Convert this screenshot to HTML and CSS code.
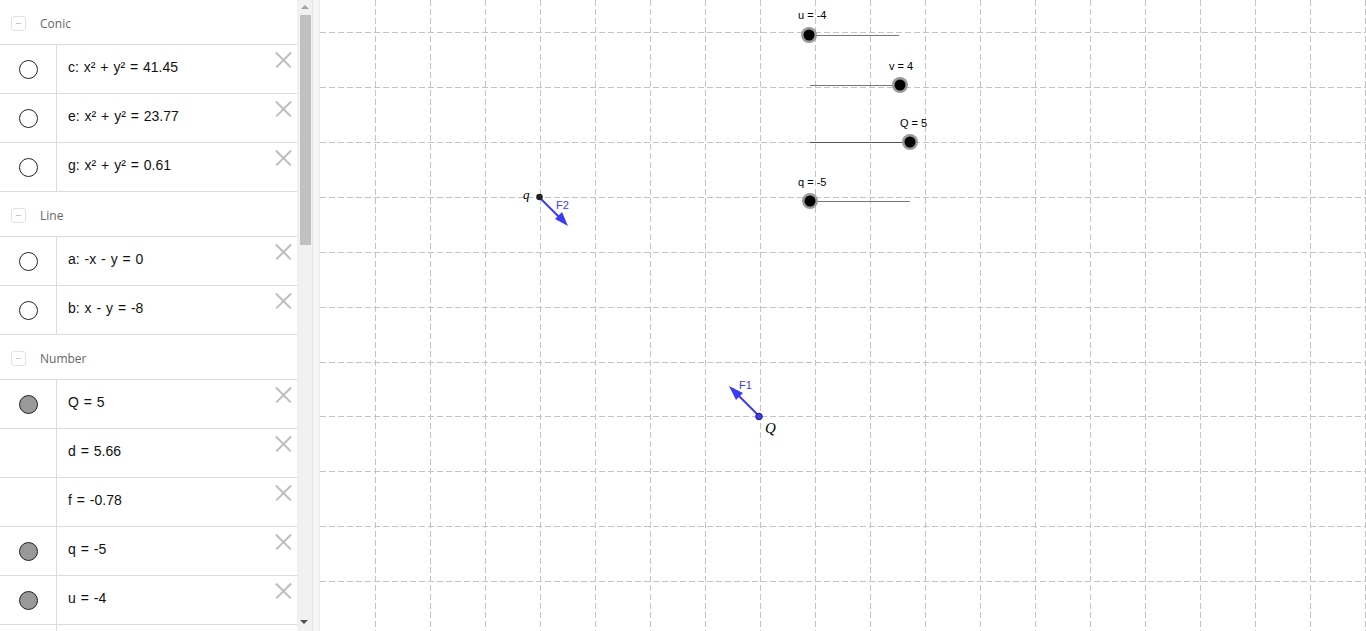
FILE: index.html
```html
<!DOCTYPE html>
<html>
<head>
<meta charset="utf-8">
<link rel="stylesheet" href="styles.css">
</head>
<body>
<div class="app">
  <div class="algebra">
    <div class="group"><span class="toggle"></span><span class="gname">Conic</span></div>
    <div class="row"><div class="mark"><span class="dot"></span></div><div class="expr">c: x² + y² = 41.45</div><span class="del"></span></div>
    <div class="row"><div class="mark"><span class="dot"></span></div><div class="expr">e: x² + y² = 23.77</div><span class="del"></span></div>
    <div class="row"><div class="mark"><span class="dot"></span></div><div class="expr">g: x² + y² = 0.61</div><span class="del"></span></div>
    <div class="group"><span class="toggle"></span><span class="gname">Line</span></div>
    <div class="row"><div class="mark"><span class="dot"></span></div><div class="expr">a: -x - y = 0</div><span class="del"></span></div>
    <div class="row"><div class="mark"><span class="dot"></span></div><div class="expr">b: x - y = -8</div><span class="del"></span></div>
    <div class="group"><span class="toggle"></span><span class="gname">Number</span></div>
    <div class="row"><div class="mark"><span class="dot filled"></span></div><div class="expr">Q = 5</div><span class="del"></span></div>
    <div class="row"><div class="mark"></div><div class="expr">d = 5.66</div><span class="del"></span></div>
    <div class="row"><div class="mark"></div><div class="expr">f = -0.78</div><span class="del"></span></div>
    <div class="row"><div class="mark"><span class="dot filled"></span></div><div class="expr">q = -5</div><span class="del"></span></div>
    <div class="row"><div class="mark"><span class="dot filled"></span></div><div class="expr">u = -4</div><span class="del"></span></div>
    <div class="row last"><div class="mark"></div><div class="expr"></div></div>
  </div>
  <div class="scrollbar">
    <span class="arrow up"></span>
    <div class="thumb"></div>
    <span class="arrow down"></span>
  </div>
  <div class="divider"></div>
  <div class="canvas">
    <svg class="graphics" width="1046" height="631" viewBox="0 0 1046 631" xmlns="http://www.w3.org/2000/svg">
      <g class="grid" stroke="#c4c4c4" stroke-width="1" stroke-dasharray="6 3">
        <line x1="55.5" y1="0" x2="55.5" y2="631"/>
        <line x1="110.5" y1="0" x2="110.5" y2="631"/>
        <line x1="165.5" y1="0" x2="165.5" y2="631"/>
        <line x1="220.5" y1="0" x2="220.5" y2="631"/>
        <line x1="275.5" y1="0" x2="275.5" y2="631"/>
        <line x1="330.5" y1="0" x2="330.5" y2="631"/>
        <line x1="385.5" y1="0" x2="385.5" y2="631"/>
        <line x1="440.5" y1="0" x2="440.5" y2="631"/>
        <line x1="495.5" y1="0" x2="495.5" y2="631"/>
        <line x1="550.5" y1="0" x2="550.5" y2="631"/>
        <line x1="605.5" y1="0" x2="605.5" y2="631"/>
        <line x1="660.5" y1="0" x2="660.5" y2="631"/>
        <line x1="715.5" y1="0" x2="715.5" y2="631"/>
        <line x1="770.5" y1="0" x2="770.5" y2="631"/>
        <line x1="825.5" y1="0" x2="825.5" y2="631"/>
        <line x1="880.5" y1="0" x2="880.5" y2="631"/>
        <line x1="935.5" y1="0" x2="935.5" y2="631"/>
        <line x1="990.5" y1="0" x2="990.5" y2="631"/>
        <line x1="1045.5" y1="0" x2="1045.5" y2="631"/>
        <line x1="0" y1="32.5" x2="1046" y2="32.5"/>
        <line x1="0" y1="87.5" x2="1046" y2="87.5"/>
        <line x1="0" y1="142.5" x2="1046" y2="142.5"/>
        <line x1="0" y1="197.5" x2="1046" y2="197.5"/>
        <line x1="0" y1="252.5" x2="1046" y2="252.5"/>
        <line x1="0" y1="307.5" x2="1046" y2="307.5"/>
        <line x1="0" y1="362.5" x2="1046" y2="362.5"/>
        <line x1="0" y1="416.5" x2="1046" y2="416.5"/>
        <line x1="0" y1="471.5" x2="1046" y2="471.5"/>
        <line x1="0" y1="526.5" x2="1046" y2="526.5"/>
        <line x1="0" y1="581.5" x2="1046" y2="581.5"/>
      </g>

      <g class="sliders" font-family="Liberation Sans, Arial, sans-serif" font-size="11" fill="#000">
        <line x1="489" y1="35.5" x2="579" y2="35.5" stroke="#777" stroke-width="1"/>
        <circle cx="489" cy="35" r="8" fill="#999"/>
        <circle cx="489" cy="35" r="5.5" fill="#000"/>
        <text x="478" y="19">u = -4</text>

        <line x1="490" y1="85.5" x2="580" y2="85.5" stroke="#777" stroke-width="1"/>
        <circle cx="580" cy="85" r="8" fill="#999"/>
        <circle cx="580" cy="85" r="5.5" fill="#000"/>
        <text x="569" y="70">v = 4</text>

        <line x1="490" y1="142.5" x2="590" y2="142.5" stroke="#555" stroke-width="1"/>
        <circle cx="590" cy="142" r="8" fill="#999"/>
        <circle cx="590" cy="142" r="5.5" fill="#000"/>
        <text x="580" y="127">Q = 5</text>

        <line x1="490" y1="201.5" x2="590" y2="201.5" stroke="#777" stroke-width="1"/>
        <circle cx="490" cy="201" r="8" fill="#999"/>
        <circle cx="490" cy="201" r="5.5" fill="#000"/>
        <text x="478" y="186">q = -5</text>
      </g>

      <g class="vectors">
        <line x1="219" y1="197" x2="242" y2="220" stroke="#3c3cf5" stroke-width="2"/>
        <polygon points="248,226 235,219 242,212" fill="#3c3cf5"/>
        <text x="236" y="209" font-family="Liberation Sans, Arial, sans-serif" font-size="11" fill="#3c3cf5">F2</text>
        <circle cx="219.5" cy="197" r="3.3" fill="#222"/>
        <text x="203" y="199" font-family="Liberation Serif, Times New Roman, serif" font-style="italic" font-size="13" fill="#000">q</text>

        <line x1="439" y1="416" x2="415" y2="392" stroke="#3c3cf5" stroke-width="2"/>
        <polygon points="409,386 423,393 416,400" fill="#3c3cf5"/>
        <text x="419" y="389" font-family="Liberation Sans, Arial, sans-serif" font-size="11" fill="#3c3cf5">F1</text>
        <circle cx="439" cy="416.5" r="3.3" fill="#3c3cf5" stroke="#1a1a66" stroke-width="1"/>
        <text x="445" y="433" font-family="Liberation Serif, Times New Roman, serif" font-style="italic" font-size="15" fill="#000">Q</text>
      </g>
    </svg>
  </div>
</div>
</body>
</html>
```

FILE: styles.css
```css
html, body {
  margin: 0;
  padding: 0;
  width: 1366px;
  height: 631px;
  overflow: hidden;
  background: #fff;
  font-family: "Liberation Sans", Arial, sans-serif;
}

.app {
  display: flex;
  width: 1366px;
  height: 631px;
}

.algebra {
  width: 297px;
  height: 631px;
  overflow: hidden;
  flex: none;
  background: #fff;
}

.group {
  display: flex;
  align-items: center;
  border-bottom: 1px solid #dcdcdc;
  box-sizing: border-box;
  height: 45px;
  padding-top: 2px;
}

.toggle {
  width: 13px;
  height: 13px;
  margin-left: 11px;
  border: 1px solid #e2e2e2;
  border-radius: 3px;
  position: relative;
  flex: none;
}

.toggle::after {
  content: "";
  position: absolute;
  left: 4px;
  right: 4px;
  top: 6px;
  height: 1px;
  background: #c8c8c8;
}

.gname {
  margin-left: 14px;
  font-family: "Open Sans", "Noto Sans", sans-serif;
  font-size: 12px;
  color: #666;
}

.row {
  height: 49px;
  display: flex;
  border-bottom: 1px solid #dcdcdc;
  box-sizing: border-box;
  position: relative;
}

.row.last {
  border-bottom: none;
}

.mark {
  width: 56px;
  flex: none;
  border-right: 1px solid #dcdcdc;
  display: flex;
  align-items: center;
  justify-content: center;
}

.dot {
  width: 17px;
  height: 17px;
  border: 1.5px solid #222;
  border-radius: 50%;
  background: #fff;
}

.dot.filled {
  background: #999;
}

.expr {
  padding-left: 11px;
  display: flex;
  align-items: center;
  font-size: 14px;
  color: #111;
  white-space: nowrap;
  padding-bottom: 4px;
  word-spacing: 1px;
}

.del {
  position: absolute;
  right: 6px;
  top: 7px;
  width: 16px;
  height: 16px;
}

.del::before,
.del::after {
  content: "";
  position: absolute;
  left: -2px;
  top: 7px;
  width: 21px;
  height: 1.5px;
  background: #bdbdbd;
  transform: rotate(45deg);
}

.del::after {
  transform: rotate(-45deg);
}

.scrollbar {
  width: 15px;
  flex: none;
  background: #f1f1f1;
  position: relative;
  display: flex;
  flex-direction: column;
  align-items: center;
}

.thumb {
  width: 11px;
  height: 230px;
  background: #c1c1c1;
  margin-left: 1px;
}

.arrow {
  width: 0;
  height: 0;
  border-left: 4px solid transparent;
  border-right: 4px solid transparent;
}

.arrow.up {
  border-bottom: 4px solid #a3a3a3;
  margin-top: 5px;
  margin-bottom: 6px;
}

.arrow.down {
  border-top: 4px solid #505050;
  position: absolute;
  bottom: 7px;
  left: 3px;
}

.divider {
  width: 8px;
  flex: none;
  background: #f6f6f6;
  border-left: 1px solid #e4e4e4;
  box-sizing: border-box;
  border-right: 1px solid #ececec;
}

.canvas {
  flex: 1;
  height: 631px;
  overflow: hidden;
  background: #fff;
}

.graphics {
  display: block;
}
```
